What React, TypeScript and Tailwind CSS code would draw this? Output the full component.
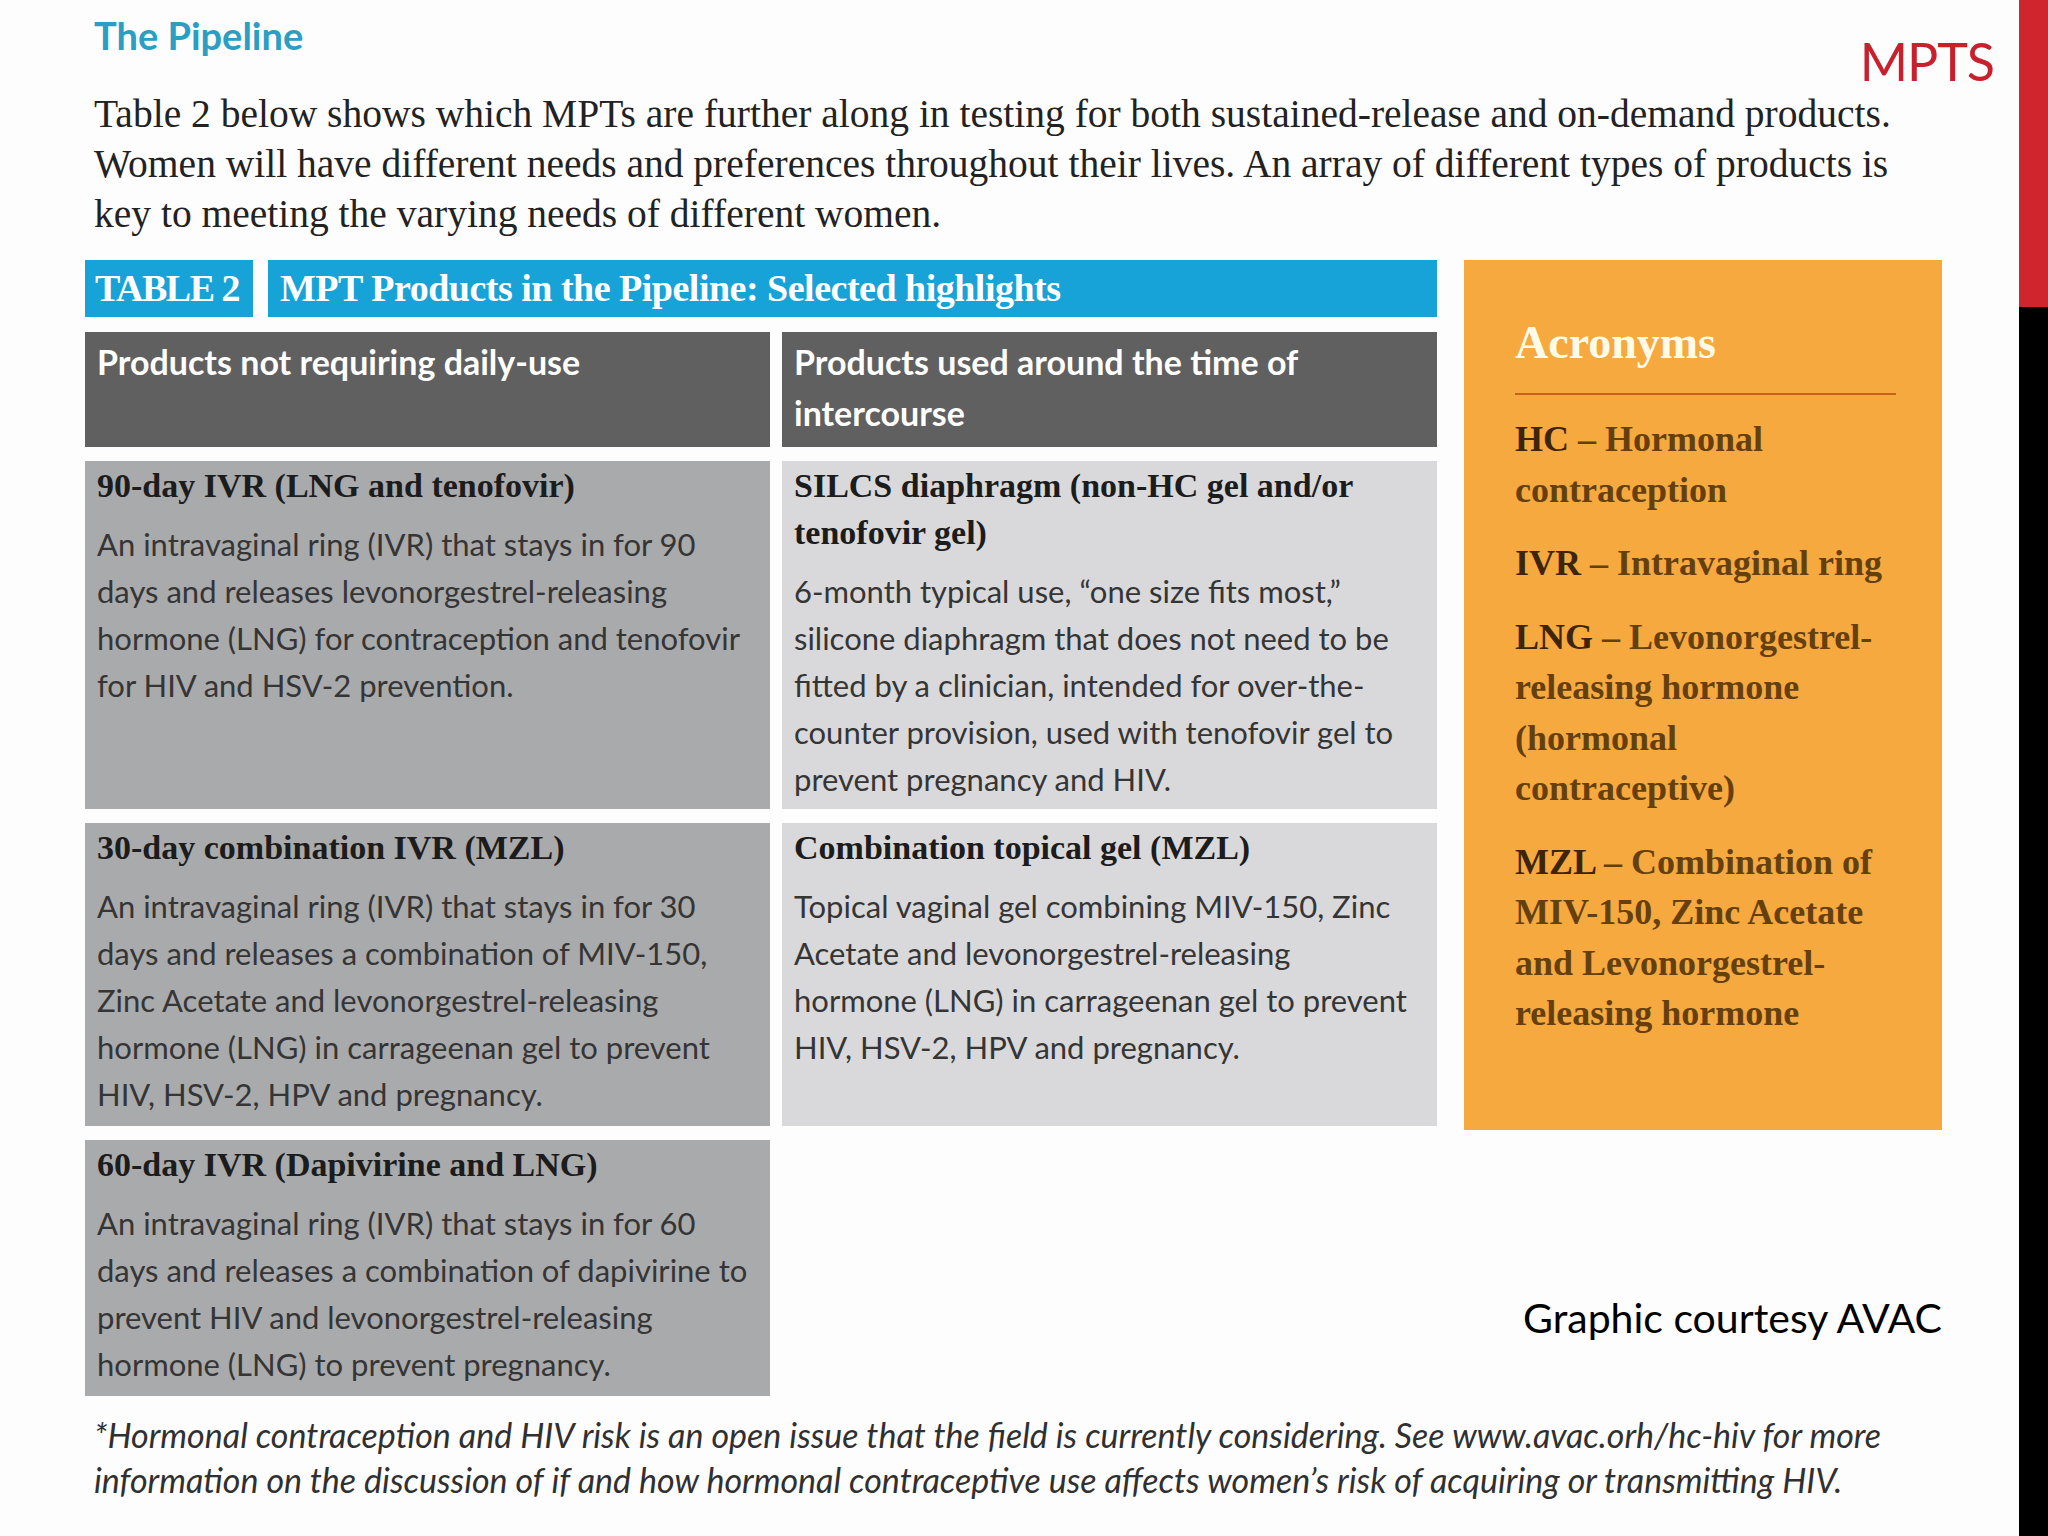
const serif = "font-['Liberation_Serif',serif]";
const sans = "font-['Lato','Liberation_Sans',sans-serif]";

type Cell = { title: string[]; body: string[]; tone: "mid" | "light" };

const rows: (Cell | null)[][] = [
  [
    {
      tone: "mid",
      title: ["90-day IVR (LNG and tenofovir)"],
      body: [
        "An intravaginal ring (IVR) that stays in for 90",
        "days and releases levonorgestrel-releasing",
        "hormone (LNG) for contraception and tenofovir",
        "for HIV and HSV-2 prevention.",
      ],
    },
    {
      tone: "light",
      title: ["SILCS diaphragm (non-HC gel and/or", "tenofovir gel)"],
      body: [
        "6-month typical use, \u201cone size fits most,\u201d",
        "silicone diaphragm that does not need to be",
        "fitted by a clinician, intended for over-the-",
        "counter provision, used with tenofovir gel to",
        "prevent pregnancy and HIV.",
      ],
    },
  ],
  [
    {
      tone: "mid",
      title: ["30-day combination IVR (MZL)"],
      body: [
        "An intravaginal ring (IVR) that stays in for 30",
        "days and releases a combination of MIV-150,",
        "Zinc Acetate and levonorgestrel-releasing",
        "hormone (LNG) in carrageenan gel to prevent",
        "HIV, HSV-2, HPV and pregnancy.",
      ],
    },
    {
      tone: "light",
      title: ["Combination topical gel (MZL)"],
      body: [
        "Topical vaginal gel combining MIV-150, Zinc",
        "Acetate and levonorgestrel-releasing",
        "hormone (LNG) in carrageenan gel to prevent",
        "HIV, HSV-2, HPV and pregnancy.",
      ],
    },
  ],
  [
    {
      tone: "mid",
      title: ["60-day IVR (Dapivirine and LNG)"],
      body: [
        "An intravaginal ring (IVR) that stays in for 60",
        "days and releases a combination of dapivirine to",
        "prevent HIV and levonorgestrel-releasing",
        "hormone (LNG) to prevent pregnancy.",
      ],
    },
    null,
  ],
];

const rowHeights = ["h-[348px]", "h-[303px]", "h-[256px]"];

const acronyms: { key: string; lines: string[] }[] = [
  { key: "HC", lines: ["\u2013 Hormonal", "contraception"] },
  { key: "IVR", lines: ["\u2013 Intravaginal ring"] },
  {
    key: "LNG",
    lines: ["\u2013  Levonorgestrel-", "releasing hormone", "(hormonal", "contraceptive)"],
  },
  {
    key: "MZL",
    lines: ["\u2013 Combination of", "MIV-150, Zinc Acetate", "and Levonorgestrel-", "releasing hormone"],
  },
];

function ProductCell({ cell, height }: { cell: Cell | null; height: string }) {
  if (!cell) return <div className={height} />;
  return (
    <div
      className={`${height} px-[12px] pt-[1px] ${
        cell.tone === "mid" ? "bg-[#a9aaac]" : "bg-[#d9d9db]"
      }`}
    >
      <div className={`${serif} text-[34px] font-bold leading-[47px] text-[#1c1c1c] whitespace-nowrap`}>
        {cell.title.map((t) => (
          <div key={t}>{t}</div>
        ))}
      </div>
      <div className={`${sans} mt-[12px] text-[31px] leading-[47px] text-[#353535] whitespace-nowrap`}>
        {cell.body.map((t) => (
          <div key={t}>{t}</div>
        ))}
      </div>
    </div>
  );
}

export default function App() {
  return (
    <div className="flex h-[1536px] w-[2048px] overflow-hidden bg-[#fdfdfd]">
      <main className="flex flex-1 flex-col pl-[85px] pt-[10px]">
        {/* heading + slide title */}
        <div className="flex items-start justify-between pl-[9px] pr-[25px]">
          <h1 className={`${sans} text-[38px] font-bold leading-[50px] text-[#2b9fc3]`}>The Pipeline</h1>
          <span className={`${sans} mt-[21px] text-[52px] leading-[60px] tracking-[-1px] text-[#c8202c]`}>MPTS</span>
        </div>

        <p className={`${serif} ml-[9px] mt-[-2px] text-[39.5px] leading-[50px] text-[#222] whitespace-nowrap`}>
          Table 2 below shows which MPTs are further along in testing for both sustained-release and on-demand products.
          <br />
          Women will have different needs and preferences throughout their lives. An array of different types of products is
          <br />
          key to meeting the varying needs of different women.
        </p>

        <div className="mt-[21px] flex gap-[27px]">
          {/* table */}
          <div className="flex w-[1352px] flex-col">
            <div className={`${serif} flex h-[57px] gap-[15px] text-[38px] font-bold leading-[57px] tracking-[-0.5px] text-white`}>
              <div className="w-[168px] bg-[#17a3d8] pl-[10px] tracking-[-1.5px]">TABLE 2</div>
              <div className="flex-1 bg-[#17a3d8] pl-[12px]">MPT Products in the Pipeline: Selected highlights</div>
            </div>

            <div className="mt-[15px] grid grid-cols-[685px_655px] gap-x-[12px] gap-y-[14px]">
              <div className={`${sans} h-[115px] bg-[#606060] px-[12px] pt-[4px] text-[34px] font-bold leading-[51px] text-white`}>
                Products not requiring daily-use
              </div>
              <div className={`${sans} h-[115px] bg-[#606060] px-[12px] pt-[4px] text-[34px] font-bold leading-[51px] text-white`}>
                Products used around the time of
                <br />
                intercourse
              </div>
              {rows.map((row, i) =>
                row.map((cell, j) => <ProductCell key={`${i}-${j}`} cell={cell} height={rowHeights[i]} />),
              )}
            </div>
          </div>

          {/* acronyms + credit */}
          <div className="flex w-[478px] flex-col">
            <div className="h-[870px] bg-[#f6a93f] pl-[51px] pr-[49px] pt-[55px]">
              <div className={`${serif} text-[46px] font-bold leading-[56px] text-[#fffbe8]`}>Acronyms</div>
              <div className="mt-[22px] h-[2px] w-[381px] bg-[#c9601c]" />
              <div className={`${serif} mt-[19px] flex flex-col gap-[23px] text-[36px] font-bold leading-[50.5px]`}>
                {acronyms.map((a) => (
                  <div key={a.key} className="text-[#65400f]">
                    <span className="text-[#3d250b]">{a.key} </span>
                    {a.lines.map((l, k) => (
                      <span key={l}>
                        {k > 0 && <br />}
                        {l}
                      </span>
                    ))}
                  </div>
                ))}
              </div>
            </div>
            <div className={`${sans} mt-[164px] text-right text-[41px] leading-[48px] text-black`}>
              Graphic courtesy AVAC
            </div>
          </div>
        </div>

        <p className={`${sans} ml-[9px] mt-[16px] text-[34px] italic leading-[45px] text-[#303030] whitespace-nowrap`}>
          *Hormonal contraception and HIV risk is an open issue that the field is currently considering. See www.avac.orh/hc-hiv for more
          <br />
          information on the discussion of if and how hormonal contraceptive use affects women&rsquo;s risk of acquiring or transmitting HIV.
        </p>
      </main>

      <aside className="flex w-[29px] flex-col">
        <div className="h-[307px] bg-[#d1252e]" />
        <div className="flex-1 bg-black" />
      </aside>
    </div>
  );
}
